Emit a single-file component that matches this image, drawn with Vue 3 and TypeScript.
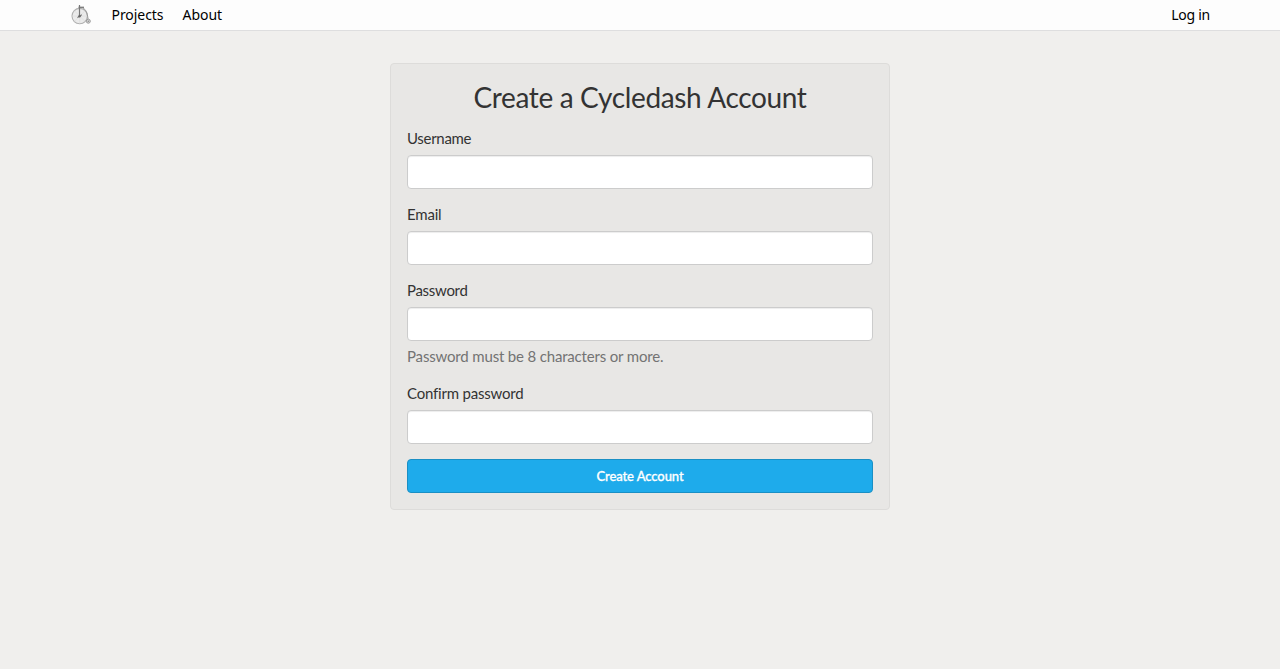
<script setup lang="ts">
interface Field {
  id: string
  label: string
  type: string
  help?: string
}

const fields: Field[] = [
  { id: 'username', label: 'Username', type: 'text' },
  { id: 'email', label: 'Email', type: 'text' },
  { id: 'password', label: 'Password', type: 'password', help: 'Password must be 8 characters or more.' },
  { id: 'confirm', label: 'Confirm password', type: 'password' },
]
</script>

<template>
  <div class="page">
    <nav class="navbar">
      <a class="brand" href="#">
        <svg width="22" height="22" viewBox="0 0 22 22" fill="none">
          <circle cx="9.7" cy="12.1" r="7.7" fill="#ebebeb" stroke="#b0b0b0" stroke-width="1.1" />
          <path d="M2 12.100h15.400M4.300 6.700l10.800 10.800M15.100 6.700L4.300 17.500M9.700 12v7.500" stroke="#dadada" stroke-width=".6" />
          <circle cx="18.3" cy="17.200" r="2" fill="#d6d6d6" stroke="#9c9c9c" stroke-width="1" />
          <circle cx="18.300" cy="17.200" r=".7" fill="#888" />
          <path d="M9.500 1v11" stroke="#777" stroke-width="1.200" />
          <path d="M8.500 3.300h5.500" stroke="#777" stroke-width="1.300" />
          <path d="M13 4c2.700 1.500 4.400 4.500 5 11" stroke="#999" stroke-width="1" />
          <path d="M7.400 13.600l4.400-2.800" stroke="#777" stroke-width="1.100" />
          <circle cx="9.500" cy="12.200" r="1.200" fill="#666" />
        </svg>
      </a>
      <a class="link projects" href="#">Projects</a>
      <a class="link about" href="#">About</a>
      <a class="link login" href="#">Log in</a>
    </nav>
    <form class="panel" @submit.prevent>
      <h1>Create a Cycledash Account</h1>
      <div v-for="f in fields" :key="f.id" class="group">
        <label :for="f.id" :class="f.id">{{ f.label }}</label>
        <input :id="f.id" :type="f.type" />
        <p v-if="f.help" class="help">{{ f.help }}</p>
      </div>
      <button type="submit">Create Account</button>
    </form>
  </div>
</template>

<style>
body {
  margin: 0;
  background: #f0efed;
}
</style>

<style scoped>
.page {
  min-height: 669px;
  background: #f0efed;
  color: #333;
  font: 15px/22px Lato, "Open Sans", sans-serif;
}
.navbar {
  box-sizing: border-box;
  height: 31px;
  padding: 0 70px;
  display: flex;
  align-items: center;
  background: #fdfdfd;
  border-bottom: 1px solid #dededf;
}
.brand {
  display: flex;
  width: 22px;
  margin-right: 19.5px;
}
.link {
  color: #000;
  text-decoration: none;
  font: 14px/22px "Noto Sans", sans-serif;
  letter-spacing: -0.05px;
  white-space: nowrap;
}
.about {
  margin-left: 19px;
}
.login {
  margin-left: auto;
  letter-spacing: -0.25px;
}
.panel {
  box-sizing: border-box;
  width: 500px;
  margin: 32px auto 0;
  padding: 16px;
  background: #e8e7e5;
  border: 1px solid #dddcda;
  border-radius: 4px;
}
h1 {
  margin: 0 0 14px;
  font-size: 28px;
  line-height: 34px;
  font-weight: 400;
  letter-spacing: -0.35px;
  text-align: center;
  white-space: nowrap;
}
.group {
  margin-bottom: 15px;
}
label {
  display: block;
  width: fit-content;
  margin-bottom: 7px;
  line-height: 20px;
  letter-spacing: -0.3px;
}
.email,
.confirm {
  letter-spacing: -0.2px;
}
input {
  display: block;
  box-sizing: border-box;
  width: 100%;
  height: 34px;
  padding: 6px 12px;
  background: #fff;
  border: 1px solid #ccc;
  border-radius: 4px;
  box-shadow: inset 0 1px 1px rgba(0, 0, 0, 0.075);
  font: inherit;
  outline: none;
}
.help {
  width: fit-content;
  margin: 5px 0 17px;
  line-height: 20px;
  letter-spacing: -0.17px;
  color: #737373;
}
button {
  display: block;
  box-sizing: border-box;
  width: 100%;
  height: 34px;
  padding: 0;
  background: #1eabeb;
  border: 1px solid #1a8fc4;
  border-radius: 4px;
  color: #fff;
  font: 500 13px/20px Lato, sans-serif;
  letter-spacing: -0.08px;
  -webkit-text-stroke: 0.3px #fff;
}
</style>
